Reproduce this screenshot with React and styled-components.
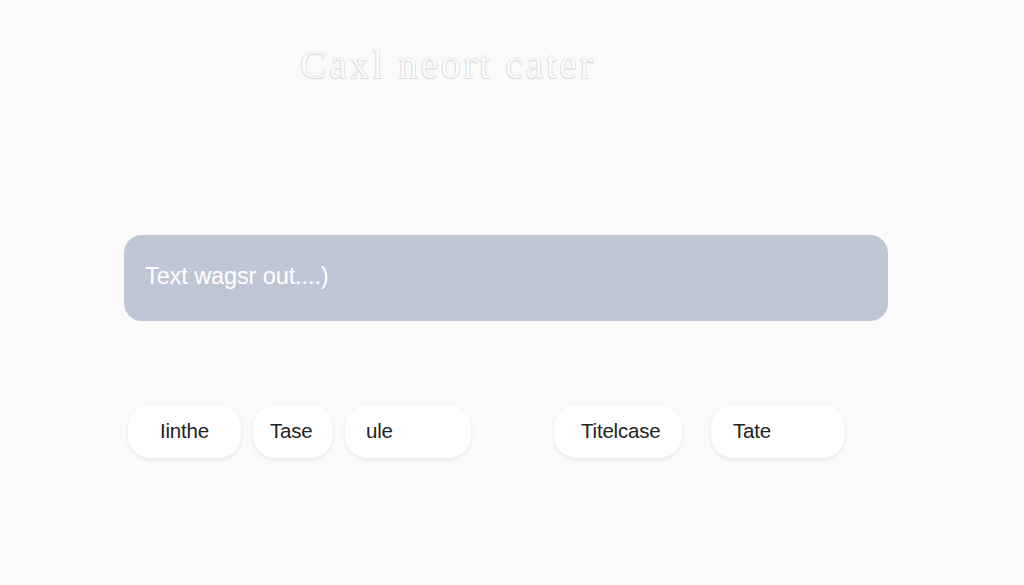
import React from "react";
import styled, { createGlobalStyle } from "styled-components";

const GlobalStyle = createGlobalStyle`
  html, body {
    margin: 0;
    padding: 0;
    background: #fafafa;
  }
  body {
    font-family: "Liberation Sans", Arial, sans-serif;
  }
`;

const Page = styled.main`
  width: 1024px;
  height: 585px;
  display: flex;
  flex-direction: column;
  background: #fafafa;
  overflow: hidden;
`;

const TitleWrap = styled.header`
  display: flex;
  padding: 40px 0 0 300px;
  height: 195px;
  box-sizing: border-box;
`;

const Title = styled.h1`
  margin: 0;
  font-family: "Liberation Serif", "Times New Roman", serif;
  font-weight: 400;
  font-size: 40px;
  line-height: 50px;
  color: #fbfbfb;
  text-shadow: 0 0 1px rgba(0, 0, 0, 0.3), 0 1px 1px rgba(0, 0, 0, 0.1);
  letter-spacing: 2.5px;
`;

const InputBar = styled.div`
  margin: 40px 0 0 124px;
  width: 764px;
  height: 86px;
  box-sizing: border-box;
  border-radius: 18px;
  background: #bfc7d6;
  display: flex;
  align-items: center;
  padding: 0 0 4px 21px;
  color: #ffffff;
  font-size: 23.5px;
  letter-spacing: -0.1px;
`;

const ChipRow = styled.div`
  display: flex;
  margin: 84px 0 0 128px;
  gap: 83px;
`;

const ChipGroup = styled.div`
  display: flex;
  gap: ${({ $gap }) => $gap}px;
`;

const Chip = styled.button`
  width: ${({ $w }) => $w}px;
  height: 53px;
  box-sizing: border-box;
  padding: 0 0 2px ${({ $pl }) => $pl}px;
  border: none;
  border-radius: 22px;
  background: #ffffff;
  box-shadow: 0 2px 4px rgba(0, 0, 0, 0.07), 0 0 1px rgba(0, 0, 0, 0.06);
  font-family: "Liberation Sans", Arial, sans-serif;
  font-size: 20.5px;
  color: #222222;
  text-align: left;
  letter-spacing: -0.2px;
`;

export default function App() {
  return (
    <>
      <GlobalStyle />
      <Page>
        <TitleWrap>
          <Title>Caxl neort cater</Title>
        </TitleWrap>
        <InputBar>Text wagsr out....)</InputBar>
        <ChipRow>
          <ChipGroup $gap={12}>
            <Chip $w={113} $pl={32}>Iinthe</Chip>
            <Chip $w={80} $pl={17}>Tase</Chip>
            <Chip $w={126} $pl={21}>ule</Chip>
          </ChipGroup>
          <ChipGroup $gap={29}>
            <Chip $w={128} $pl={27}>Titelcase</Chip>
            <Chip $w={134} $pl={22}>Tate</Chip>
          </ChipGroup>
        </ChipRow>
      </Page>
    </>
  );
}
